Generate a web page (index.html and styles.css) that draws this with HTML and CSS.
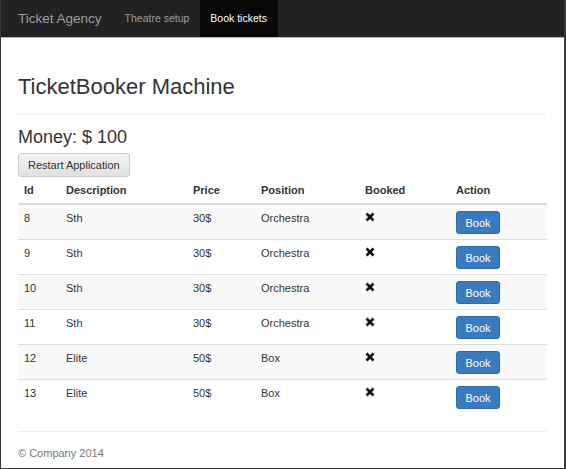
FILE: index.html
```html
<!DOCTYPE html>
<html>
<head>
<meta charset="utf-8">
<link rel="stylesheet" href="styles.css">
</head>
<body>
<div class="frame">
  <nav class="navbar">
    <span class="brand">Ticket Agency</span>
    <span class="nav-link">Theatre setup</span>
    <span class="nav-link active">Book tickets</span>
  </nav>
  <main class="container">
    <h1 class="title">TicketBooker Machine</h1>
    <hr class="rule">
    <h3 class="money">Money: $ 100</h3>
    <button class="btn-default">Restart Application</button>
    <table class="tickets">
      <thead>
        <tr><th class="c-id">Id</th><th class="c-desc">Description</th><th class="c-price">Price</th><th class="c-pos">Position</th><th class="c-booked">Booked</th><th>Action</th></tr>
      </thead>
      <tbody>
        <tr><td>8</td><td>Sth</td><td>30$</td><td>Orchestra</td><td><svg class="x" viewBox="0 0 10 10"><path d="M1.5 1.5 L8.5 8.5 M8.5 1.5 L1.5 8.5"/></svg></td><td><button class="btn-primary">Book</button></td></tr>
        <tr><td>9</td><td>Sth</td><td>30$</td><td>Orchestra</td><td><svg class="x" viewBox="0 0 10 10"><path d="M1.5 1.5 L8.5 8.5 M8.5 1.5 L1.5 8.5"/></svg></td><td><button class="btn-primary">Book</button></td></tr>
        <tr><td>10</td><td>Sth</td><td>30$</td><td>Orchestra</td><td><svg class="x" viewBox="0 0 10 10"><path d="M1.5 1.5 L8.5 8.5 M8.5 1.5 L1.5 8.5"/></svg></td><td><button class="btn-primary">Book</button></td></tr>
        <tr><td>11</td><td>Sth</td><td>30$</td><td>Orchestra</td><td><svg class="x" viewBox="0 0 10 10"><path d="M1.5 1.5 L8.5 8.5 M8.5 1.5 L1.5 8.5"/></svg></td><td><button class="btn-primary">Book</button></td></tr>
        <tr><td>12</td><td>Elite</td><td>50$</td><td>Box</td><td><svg class="x" viewBox="0 0 10 10"><path d="M1.5 1.5 L8.5 8.5 M8.5 1.5 L1.5 8.5"/></svg></td><td><button class="btn-primary">Book</button></td></tr>
        <tr><td>13</td><td>Elite</td><td>50$</td><td>Box</td><td><svg class="x" viewBox="0 0 10 10"><path d="M1.5 1.5 L8.5 8.5 M8.5 1.5 L1.5 8.5"/></svg></td><td><button class="btn-primary">Book</button></td></tr>
      </tbody>
    </table>
    <hr class="rule footer-rule">
    <footer class="footer">© Company 2014</footer>
  </main>
</div>
</body>
</html>
```
FILE: styles.css
```css
html, body {
  margin: 0;
  padding: 0;
  background: #fff;
}
.frame {
  width: 566px;
  height: 469px;
  box-sizing: border-box;
  border-left: 1px solid #3a3a3a;
  border-right: 2px solid #3a3a3a;
  border-bottom: 1px solid #3a3a3a;
  font-family: "Liberation Sans", Arial, sans-serif;
  font-size: 11px;
  color: #333;
  overflow: hidden;
}
.navbar {
  height: 37px;
  background: #222;
  border-bottom: 1px solid #b0b6b8;
  display: flex;
  align-items: stretch;
  padding-left: 17px;
}
.brand {
  display: flex;
  align-items: center;
  font-size: 13.5px;
  color: #9d9d9d;
  margin-right: 23px;
}
.nav-link {
  display: flex;
  align-items: center;
  padding: 0 11px 1px 0;
  color: #9d9d9d;
  font-size: 10.5px;
}
.nav-link.active {
  background: #080808;
  color: #fff;
  padding: 0 11px 1px 10px;
}
.container {
  padding: 0 17px;
}
.title {
  font-weight: normal;
  font-size: 22px;
  color: #333;
  margin: 36px 0 0;
  line-height: 26px;
}
.rule {
  border: 0;
  border-top: 1px solid #eee;
  margin: 14px 0 0;
}
.money {
  font-weight: normal;
  font-size: 18px;
  margin: 12px 0 0;
  line-height: 20px;
}
.btn-default {
  margin-top: 6px;
  height: 24px;
  padding: 0 9px;
  font-family: inherit;
  font-size: 11px;
  color: #333;
  background: linear-gradient(#f4f4f4, #e0e0e0);
  border: 1px solid #ccc;
  border-radius: 3px;
  display: block;
}
.tickets {
  width: 100%;
  border-collapse: collapse;
  margin-top: 0;
}
.tickets th {
  text-align: left;
  font-weight: bold;
  padding: 6px 6px 6px;
  height: 14px;
  line-height: 14px;
  border-bottom: 2px solid #ddd;
}
.tickets td {
  padding: 6px 6px 0;
  height: 28px;
  vertical-align: top;
  line-height: 14px;
  color: #333;
  border-top: 1px solid #ddd;
}
.tickets tbody tr:first-child td {
  border-top: 0;
}
.tickets tbody tr:nth-child(odd) {
  background: #f9f9f9;
}
.c-id { width: 30px; }
.c-desc { width: 115px; }
.c-price { width: 56px; }
.c-pos { width: 92px; }
.c-booked { width: 79px; }
.x {
  width: 10px;
  height: 10px;
  stroke: #111;
  stroke-width: 2.6;
  margin-top: 1px;
}
.btn-primary {
  margin-top: 0;
  height: 23px;
  width: 44px;
  padding: 0;
  font-family: inherit;
  font-size: 11px;
  color: #fff;
  background: #3a7bbf;
  border: 1px solid #2e6da4;
  border-radius: 3px;
}
.footer-rule {
  margin-top: 17px;
}
.footer {
  margin-top: 15px;
  color: #777;
  font-size: 11px;
}
```
